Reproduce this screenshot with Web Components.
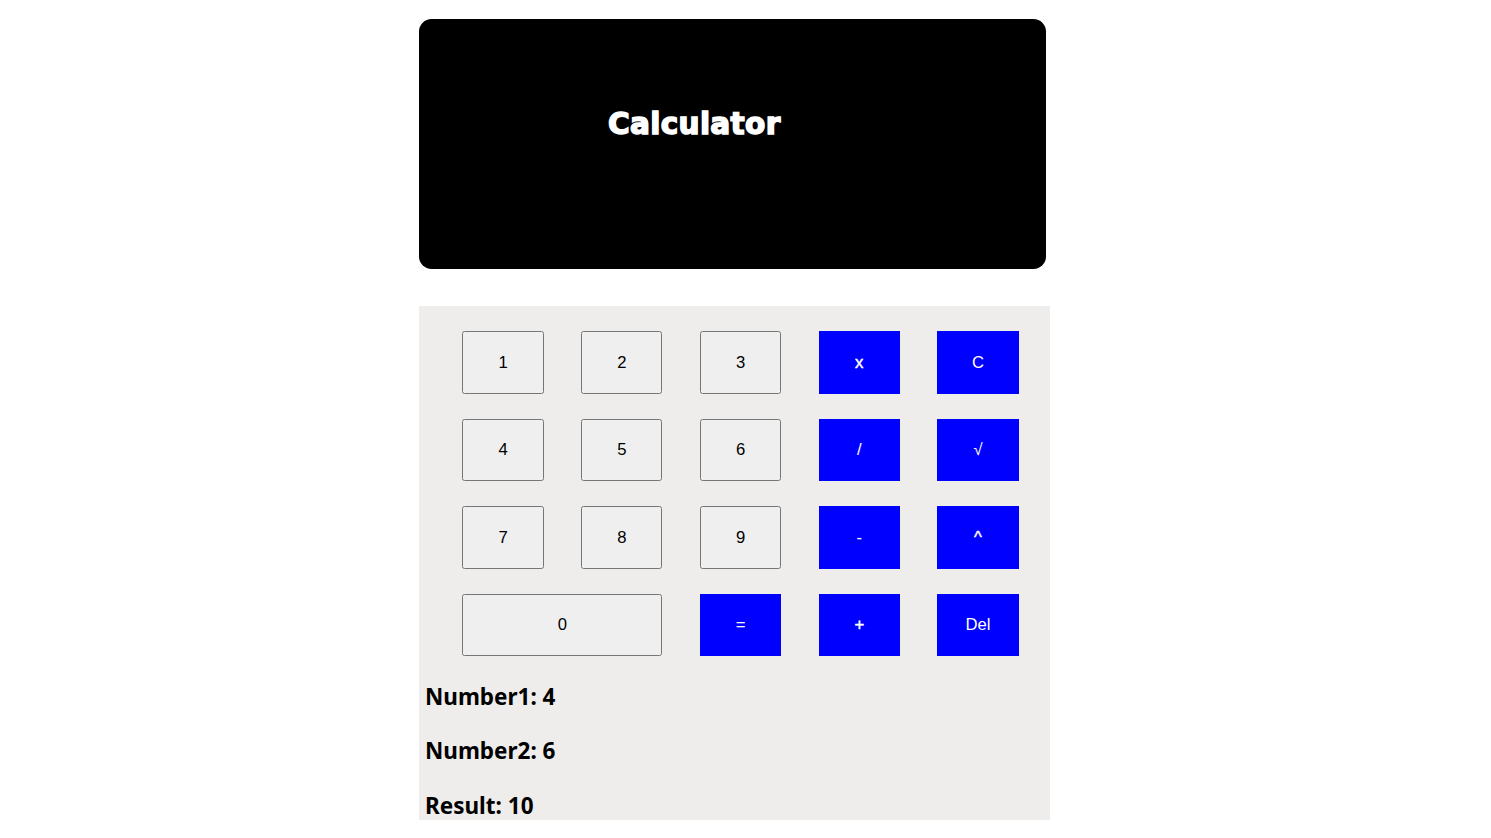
<!DOCTYPE html>
<html lang="en"><head><meta charset="utf-8"><title>Calculator</title>
<style>html,body{margin:0;background:#fff}body{height:838px;overflow:hidden}</style></head>
<body><calc-app></calc-app>
<script>
class CalcBase extends HTMLElement{
  constructor(){super();this.attachShadow({mode:'open'}).innerHTML=this.constructor.markup;}
}
class CalcDisplay extends CalcBase{
  static markup=`<style>
  :host{display:block;box-sizing:border-box;width:627px;height:250px;border-radius:12.5px;background:#000;color:#fff;padding:87px 0 0 189px}
  h1{margin:0;font:bold 29.5px/36px "DejaVu Sans",sans-serif;letter-spacing:.35px;white-space:nowrap;-webkit-text-stroke:1.5px #fff}
  </style><h1><slot></slot></h1>`;
}
class CalcKey extends CalcBase{
  static markup=`<style>
  :host{display:block}
  :host([wide]){grid-column:span 2}
  button{display:block;box-sizing:border-box;width:100%;height:62.5px;margin:0;padding:.25px 0 0;border:1px solid #767676;border-radius:2.5px;background:#efefef;color:#000;font:16.667px "Liberation Sans",Arial,sans-serif}
  :host([op]) button{background:#00f;color:#fff;border:0;border-radius:0}
  :host([strong]) button{-webkit-text-stroke:.45px #fff}
  </style><button><slot></slot></button>`;
}
class CalcReadout extends CalcBase{
  static markup=`<style>
  :host{display:block;height:54.5px;padding-left:6px;font:bold 22.5px/30px "Noto Sans","Open Sans",sans-serif;white-space:nowrap}
  </style><slot></slot>`;
}
class CalcApp extends CalcBase{
  static markup=`<style>
  :host{display:block;width:631px;margin-left:419px;padding-top:19px}
  main{box-sizing:border-box;height:514px;margin-top:37px;padding-top:25.25px;background:#eeedeb;overflow:hidden}
  .keys{display:grid;grid-template-columns:repeat(5,81.25px);gap:25px 37.5px;padding-left:43.4px}
  .out{margin-top:25.7px}
  </style>
  <calc-display>Calculator</calc-display>
  <main><div class="keys">
  <calc-key>1</calc-key><calc-key>2</calc-key><calc-key>3</calc-key><calc-key op strong>x</calc-key><calc-key op>C</calc-key>
  <calc-key>4</calc-key><calc-key>5</calc-key><calc-key>6</calc-key><calc-key op>/</calc-key><calc-key op>√</calc-key>
  <calc-key>7</calc-key><calc-key>8</calc-key><calc-key>9</calc-key><calc-key op>-</calc-key><calc-key op strong>^</calc-key>
  <calc-key wide>0</calc-key><calc-key op>=</calc-key><calc-key op strong>+</calc-key><calc-key op>Del</calc-key>
  </div><div class="out"><calc-readout>Number1: 4</calc-readout><calc-readout>Number2: 6</calc-readout><calc-readout>Result: 10</calc-readout></div></main>`;
}
customElements.define('calc-display',CalcDisplay);
customElements.define('calc-key',CalcKey);
customElements.define('calc-readout',CalcReadout);
customElements.define('calc-app',CalcApp);
</script></body></html>
